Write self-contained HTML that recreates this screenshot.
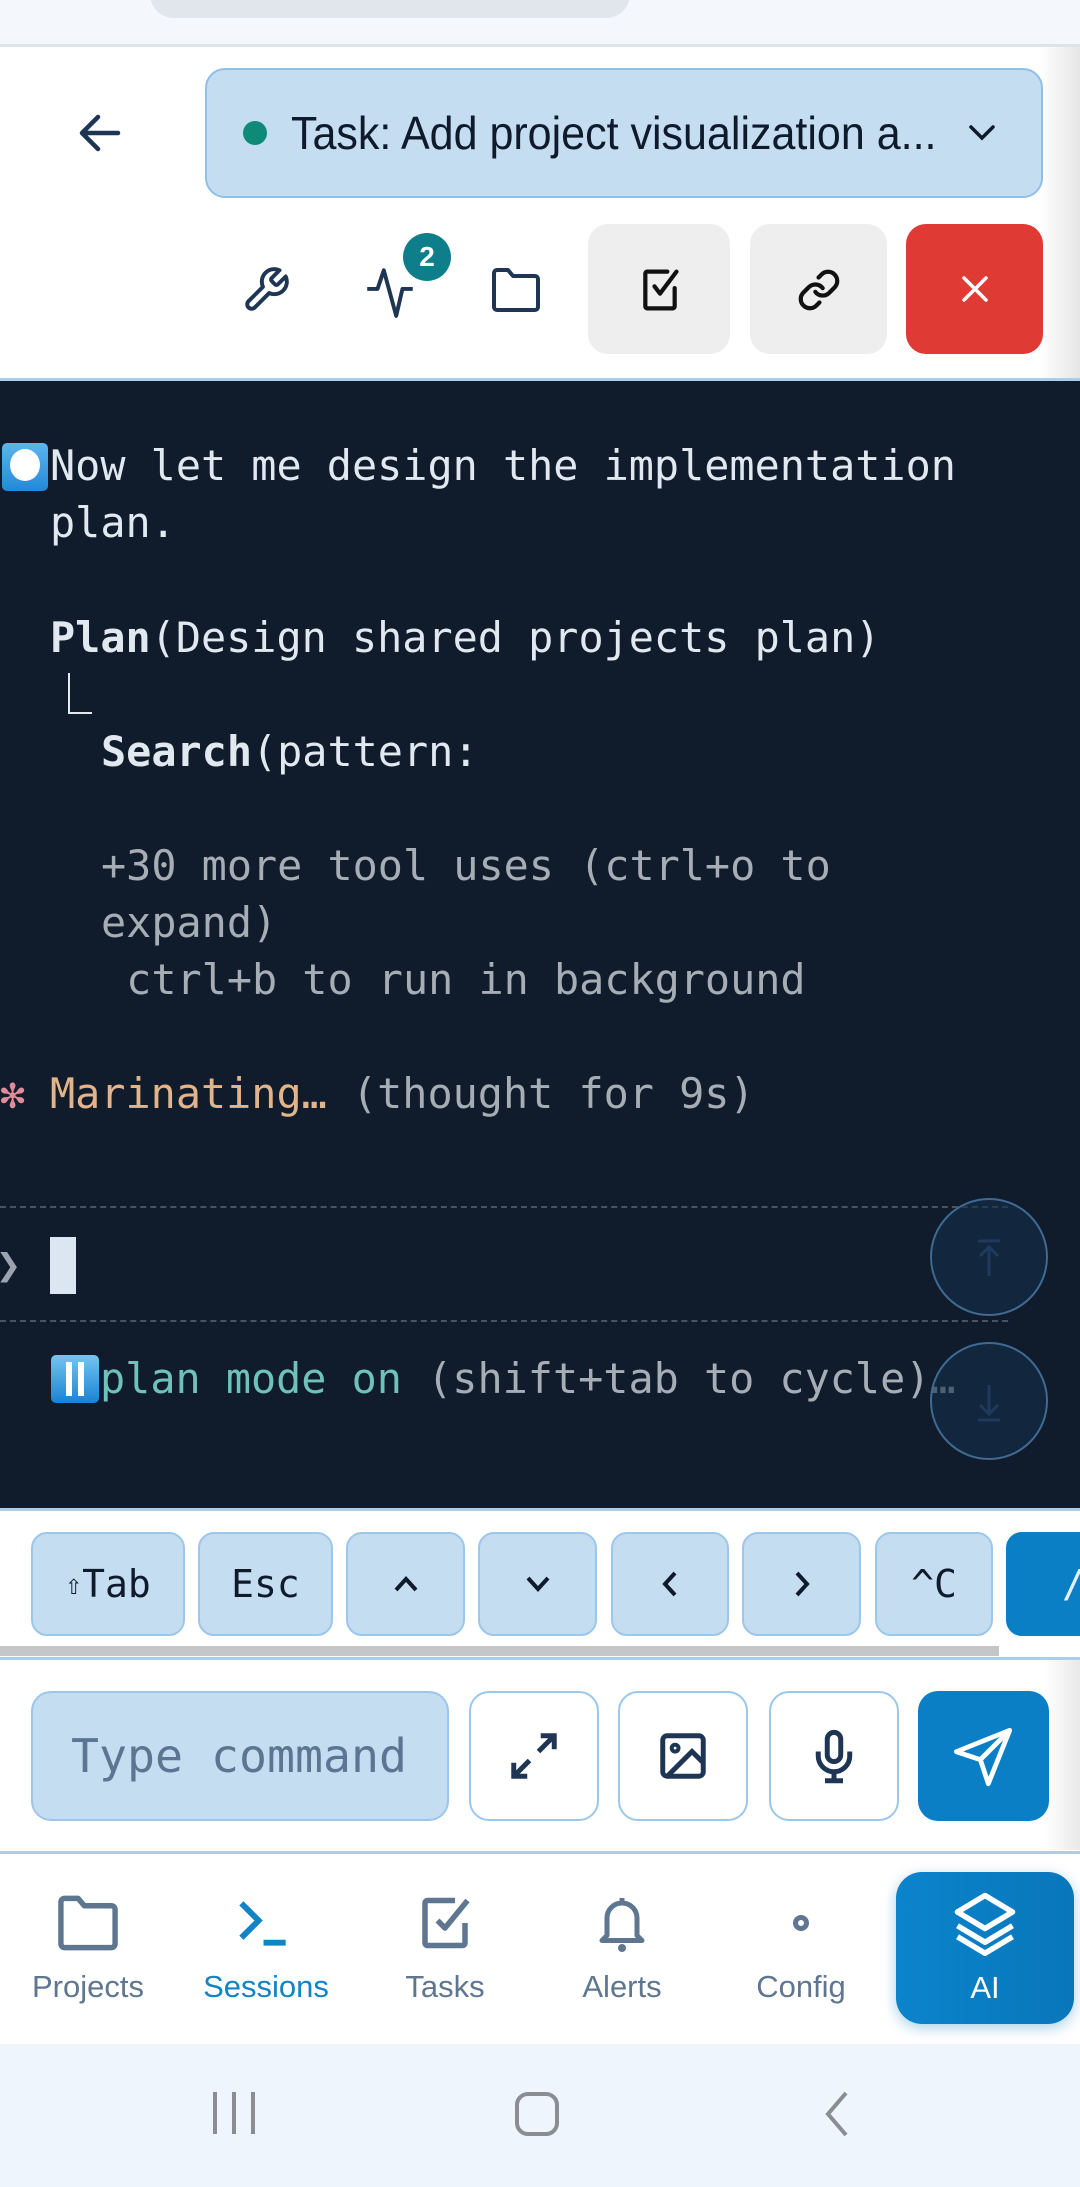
<!DOCTYPE html>
<html><head><meta charset="utf-8"><style>
*{margin:0;padding:0;box-sizing:border-box}
body{width:1080px;height:2187px;position:relative;overflow:hidden;background:#fff;font-family:"Liberation Sans",sans-serif}
.a{position:absolute}
.mono{font-family:"DejaVu Sans Mono","Liberation Mono",monospace;font-size:41.8px;line-height:57.2px;white-space:pre}
.key{position:absolute;top:1532px;height:104px;background:#c5ddf0;border:2px solid #9cc7ea;border-radius:16px;display:flex;align-items:center;justify-content:center;font-family:"DejaVu Sans Mono",monospace;font-size:38px;color:#0f1b2d}
.ib{position:absolute;top:1691px;height:130px;width:130px;border:2px solid #9cc7ea;border-radius:20px;background:#fff;display:flex;align-items:center;justify-content:center}
.nav{position:absolute;top:1893px;width:160px;text-align:center;color:#5f7691;font-size:31px}
.nav svg{display:block;margin:0 auto 16px}
</style></head><body>
<div class="a" style="left:0;top:0;width:1080px;height:45px;background:#f4f7fb"></div>
<div class="a" style="left:150px;top:-30px;width:480px;height:48px;background:#e1e6ec;border-radius:24px"></div>
<div class="a" style="left:0;top:44px;width:1080px;height:3px;background:#dde3ea"></div>
<svg class="a" style="left:78px;top:113px" width="44" height="40" viewBox="0 0 44 40"><path d="M40 20H5M20 4L4 20l16 16" fill="none" stroke="#1e3553" stroke-width="4.5" stroke-linecap="round" stroke-linejoin="round"/></svg>
<div class="a" style="left:205px;top:68px;width:838px;height:130px;background:#c5ddf0;border:2px solid #90c0e8;border-radius:20px"></div>
<div class="a" style="left:243px;top:121px;width:24px;height:24px;border-radius:50%;background:#0e8a76"></div>
<div class="a" style="left:291px;top:106px;font-size:46px;color:#0f1b2d;line-height:54px;transform:scaleX(0.935);transform-origin:0 0;white-space:nowrap">Task: Add project visualization a...</div>
<svg class="a" style="left:968px;top:124px" width="28" height="18" viewBox="0 0 28 18"><path d="M3 3l11 11L25 3" fill="none" stroke="#0f1b2d" stroke-width="3.5" stroke-linecap="round"/></svg>
<svg class="a" style="left:241px;top:265px" width="50" height="50" viewBox="0 0 24 24"><path d="M14.7 6.3a1 1 0 000 1.4l1.6 1.6a1 1 0 001.4 0l3.77-3.77a6 6 0 01-7.940 7.94l-6.91 6.91a2.12 2.12 0 01-3-3l6.91-6.91a6 6 0 017.94-7.94l-3.76 3.76z" fill="none" stroke="#1e3553" stroke-width="1.9" stroke-linejoin="round"/></svg>
<svg class="a" style="left:365px;top:262px" width="50" height="58" viewBox="0 0 24 28"><path d="M1 13h5l3-9 6 22 3-13h5" fill="none" stroke="#1e3553" stroke-width="1.9" stroke-linejoin="round"/></svg>
<div class="a" style="left:403px;top:233px;width:48px;height:48px;border-radius:50%;background:#0e7f8a;color:#fff;font-weight:bold;font-size:28px;text-align:center;line-height:48px">2</div>
<svg class="a" style="left:490px;top:266px" width="52" height="48" viewBox="0 0 26 24"><path d="M2 3.5A1.5 1.5 0 013.5 2H9l2.5 3H22.5A1.5 1.5 0 0124 6.5V20.5A1.5 1.5 0 0122.5 22H3.5A1.5 1.5 0 012 20.5z" fill="none" stroke="#1e3553" stroke-width="2" stroke-linejoin="round"/></svg>
<div class="a" style="left:588px;top:224px;width:142px;height:130px;background:#eeeeee;border-radius:20px"></div>
<svg class="a" style="left:638px;top:266px" width="44" height="48" viewBox="0 0 24 26"><path d="M20 12v10a1 1 0 01-1 1H5a1 1 0 01-1-1V4a1 1 0 011-1h11M9 11l3 4L21 3" fill="none" stroke="#111" stroke-width="2.3" stroke-linecap="round" stroke-linejoin="round"/></svg>
<div class="a" style="left:750px;top:224px;width:137px;height:130px;background:#eeeeee;border-radius:20px"></div>
<svg class="a" style="left:797px;top:268px" width="44" height="44" viewBox="0 0 24 24"><path d="M10 13a5 5 0 007.54.54l3-3a5 5 0 00-7.07-7.07l-1.72 1.71M14 11a5 5 0 00-7.54-.54l-3 3a5 5 0 007.07 7.07l1.71-1.71" fill="none" stroke="#111" stroke-width="2.3" stroke-linecap="round"/></svg>
<div class="a" style="left:906px;top:224px;width:137px;height:130px;background:#e03a35;border-radius:20px"></div>
<svg class="a" style="left:960px;top:274px" width="30" height="30" viewBox="0 0 30 30"><path d="M4 4l22 22M26 4L4 26" stroke="#fff" stroke-width="3.5" stroke-linecap="round"/></svg>
<div class="a" style="left:1040px;top:47px;width:40px;height:333px;background:linear-gradient(90deg,rgba(0,0,0,0),rgba(0,0,0,0.1))"></div>
<div class="a" style="left:0;top:378px;width:1080px;height:3px;background:#a9cdea"></div>
<div class="a" style="left:0;top:381px;width:1080px;height:1129px;background:#101c2c"></div>
<div class="a" style="left:2px;top:443px;width:46px;height:48px;border-radius:5px;background:linear-gradient(#5cb6ef,#2388d6)"></div>
<div class="a" style="left:10px;top:449px;width:30px;height:32px;border-radius:50%;background:#fff"></div>
<div class="a mono" style="left:50px;top:437px;color:#e2e8f0">Now let me design the implementation
plan.

<b>Plan</b>(Design shared projects plan)
</div>
<div class="a" style="left:68px;top:673px;width:24px;height:41px;border-left:2px solid #e2e8f0;border-bottom:2px solid #e2e8f0"></div>
<div class="a mono" style="left:101px;top:723px;color:#e2e8f0"><b>Search</b>(pattern:</div>
<div class="a mono" style="left:101px;top:837px;color:#a7adb5">+30 more tool uses (ctrl+o to
expand)
 ctrl+b to run in background</div>
<div class="a mono" style="left:0;top:1065px;color:#e28b9a">✻</div>
<div class="a mono" style="left:50px;top:1065px;color:#e3b48a">Marinating… <span style="color:#a7adb5">(thought for 9s)</span></div>
<div class="a" style="left:0;top:1206px;width:1008px;height:0;border-top:2px dashed #4a5360"></div>
<div class="a" style="left:0;top:1320px;width:1008px;height:0;border-top:2px dashed #4a5360"></div>
<div class="a mono" style="left:-4px;top:1236px;color:#9ca3af">❯</div>
<div class="a" style="left:50px;top:1237px;width:26px;height:57px;background:#dce6f2"></div>
<div class="a" style="left:51px;top:1355px;width:48px;height:48px;border-radius:5px;background:linear-gradient(#73c6f0,#1a82d3)"></div>
<div class="a" style="left:66px;top:1362px;width:6px;height:34px;background:#fff"></div>
<div class="a" style="left:78px;top:1362px;width:6px;height:34px;background:#fff"></div>
<div class="a mono" style="left:100px;top:1350px;color:#6fc2b8">plan mode on <span style="color:#a7adb5">(shift+tab to cycle)…</span></div>
<div class="a" style="left:930px;top:1198px;width:118px;height:118px;border-radius:50%;border:2px solid #3f6a91;background:rgba(20,45,75,0.6)"></div>
<svg class="a" style="left:974px;top:1238px" width="30" height="40" viewBox="0 0 30 40"><path d="M4 3h22M15 38V10M6 18l9-9 9 9" fill="none" stroke="#1e3b5e" stroke-width="3"/></svg>
<div class="a" style="left:930px;top:1342px;width:118px;height:118px;border-radius:50%;border:2px solid #3f6a91;background:rgba(20,45,75,0.6)"></div>
<svg class="a" style="left:974px;top:1383px" width="30" height="40" viewBox="0 0 30 40"><path d="M4 37h22M15 2v28M6 22l9 9 9-9" fill="none" stroke="#1e3b5e" stroke-width="3"/></svg>
<div class="a" style="left:0;top:1508px;width:1080px;height:3px;background:#a9cdea"></div>
<div class="key" style="left:31px;width:154px"><span style="font-size:28px">⇧</span>Tab</div>
<div class="key" style="left:198px;width:135px">Esc</div>
<div class="key" style="left:346px;width:119px"><svg width="26" height="18" viewBox="0 0 26 18"><path d="M3 15L13 4l10 11" fill="none" stroke="#0f1b2d" stroke-width="4"/></svg></div>
<div class="key" style="left:478px;width:119px"><svg width="26" height="18" viewBox="0 0 26 18"><path d="M3 3l10 11L23 3" fill="none" stroke="#0f1b2d" stroke-width="4"/></svg></div>
<div class="key" style="left:611px;width:118px"><svg width="18" height="28" viewBox="0 0 18 28"><path d="M14 3L4 14l10 11" fill="none" stroke="#0f1b2d" stroke-width="4"/></svg></div>
<div class="key" style="left:742px;width:119px"><svg width="18" height="28" viewBox="0 0 18 28"><path d="M4 3l10 11L4 25" fill="none" stroke="#0f1b2d" stroke-width="4"/></svg></div>
<div class="key" style="left:875px;width:118px">^C</div>
<div class="key" style="left:1006px;width:120px;background:#0a7fc6;border-color:#0a7fc6;color:#e6f0fa;justify-content:flex-start;padding-left:54px">/</div>
<div class="a" style="left:0;top:1646px;width:999px;height:10px;background:#c4c6c8"></div>
<div class="a" style="left:0;top:1657px;width:1080px;height:3px;background:#a9cdea"></div>
<div class="a" style="left:31px;top:1691px;width:418px;height:130px;background:#c5ddf0;border:2px solid #9cc7ea;border-radius:20px;font-family:'DejaVu Sans Mono',monospace;font-size:46.5px;color:#5c7592;line-height:126px;padding-left:38px;white-space:nowrap;overflow:hidden">Type command</div>
<div class="ib" style="left:469px"><svg width="54" height="54" viewBox="0 0 24 24"><path d="M15 3h6v6M9 21H3v-6M21 3l-7 7M3 21l7-7" fill="none" stroke="#1e3553" stroke-width="2.2"/></svg></div>
<div class="ib" style="left:618px"><svg width="54" height="54" viewBox="0 0 24 24"><rect x="3" y="3" width="18" height="18" rx="2" fill="none" stroke="#1e3553" stroke-width="2.2"/><circle cx="8.5" cy="8.5" r="1.5" fill="none" stroke="#1e3553" stroke-width="1.8"/><path d="M21 15l-5-5L5 21" fill="none" stroke="#1e3553" stroke-width="2.2"/></svg></div>
<div class="ib" style="left:769px"><svg width="54" height="58" viewBox="0 0 24 24"><rect x="9" y="1.5" width="6" height="13" rx="3" fill="none" stroke="#1e3553" stroke-width="2.2"/><path d="M19 10v2a7 7 0 01-14 0v-2M12 19v4M8 23h8" fill="none" stroke="#1e3553" stroke-width="2.2"/></svg></div>
<div class="a" style="left:918px;top:1691px;width:131px;height:130px;background:#0a7fc6;border-radius:20px"></div>
<svg class="a" style="left:951px;top:1725px" width="64" height="64" viewBox="0 0 24 24"><path d="M22 2L2 10l9 3 3 9z M22 2L11 13" fill="none" stroke="#fff" stroke-width="1.8" stroke-linejoin="round"/></svg>
<div class="a" style="left:1045px;top:1660px;width:35px;height:190px;background:linear-gradient(90deg,rgba(0,0,0,0),rgba(0,0,0,0.09))"></div>
<div class="a" style="left:0;top:1851px;width:1080px;height:3px;background:#a9cdea"></div>
<div class="nav" style="left:8px"><svg width="64" height="60" viewBox="0 0 26 24"><path d="M2 3.5A1.5 1.5 0 013.5 2H9l2.5 3H22.5A1.5 1.5 0 0124 6.5V20.5A1.5 1.5 0 0122.5 22H3.5A1.5 1.5 0 012 20.5z" fill="none" stroke="#5f7691" stroke-width="2.2" stroke-linejoin="round"/></svg>Projects</div>
<div class="nav" style="left:186px;color:#1283c4"><svg width="64" height="60" viewBox="0 0 26 24"><path d="M3 4l7 7-7 7M12 20h9" fill="none" stroke="#1283c4" stroke-width="2.4"/></svg>Sessions</div>
<div class="nav" style="left:365px"><svg width="64" height="60" viewBox="0 0 24 24"><path d="M20 12v8a1 1 0 01-1 1H5a1 1 0 01-1-1V4a1 1 0 011-1h11M9 11l3 3L21 3" fill="none" stroke="#5f7691" stroke-width="2.2" stroke-linejoin="round"/></svg>Tasks</div>
<div class="nav" style="left:542px"><svg width="64" height="60" viewBox="0 0 24 24"><path d="M6 17V10a6 6 0 0112 0v7l2 2H4z M12 2v2" fill="none" stroke="#5f7691" stroke-width="2" stroke-linejoin="round"/><circle cx="12" cy="22" r="1.6" fill="#5f7691"/></svg>Alerts</div>
<div class="nav" style="left:721px"><svg width="64" height="60" viewBox="0 0 24 24"><circle cx="12" cy="12" r="2.2" fill="none" stroke="#5f7691" stroke-width="2"/></svg>Config</div>
<div class="a" style="left:896px;top:1872px;width:178px;height:152px;border-radius:26px;background:linear-gradient(90deg,#0b84cc,#0976ba);box-shadow:0 4px 14px rgba(10,120,190,0.35)"></div>
<svg class="a" style="left:952px;top:1890px" width="66" height="66" viewBox="0 0 24 24"><path d="M12 2L2 8l10 6 10-6z M2 13l10 6 10-6 M2 17l10 6 10-6" fill="none" stroke="#fff" stroke-width="2" stroke-linejoin="round"/></svg>
<div class="a" style="left:896px;top:1970px;width:178px;text-align:center;color:#fff;font-size:31px">AI</div>
<div class="a" style="left:0;top:2044px;width:1080px;height:143px;background:#eef5fd"></div>
<div class="a" style="left:213px;top:2092px;width:4px;height:42px;background:#8a8d93"></div>
<div class="a" style="left:232px;top:2092px;width:4px;height:42px;background:#8a8d93"></div>
<div class="a" style="left:251px;top:2092px;width:4px;height:42px;background:#8a8d93"></div>
<div class="a" style="left:515px;top:2092px;width:44px;height:44px;border:4px solid #8a8d93;border-radius:13px"></div>
<svg class="a" style="left:822px;top:2090px" width="30" height="48" viewBox="0 0 30 48"><path d="M24 3L6 24l18 21" fill="none" stroke="#8a8d93" stroke-width="4"/></svg>
</body></html>
